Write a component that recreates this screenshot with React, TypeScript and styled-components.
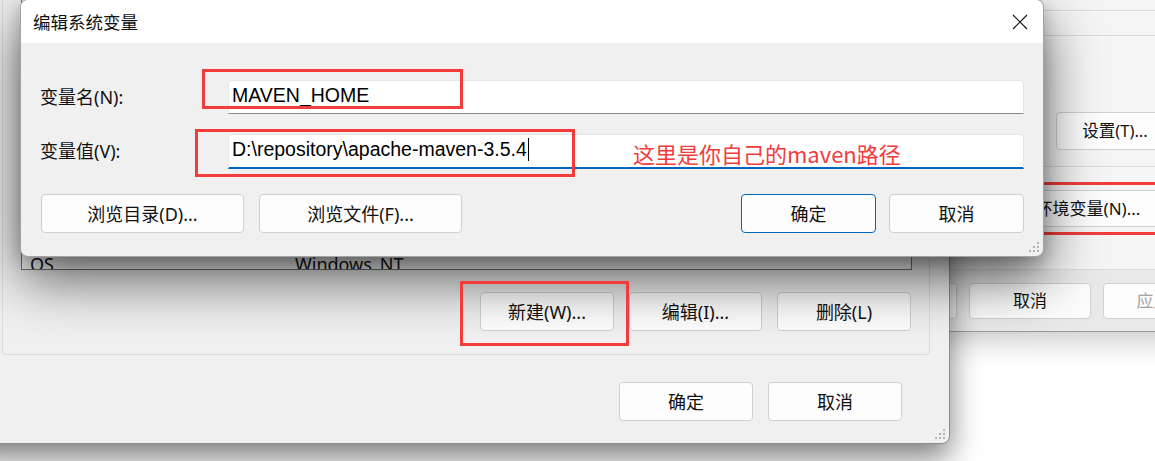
import React from "react";
import styled, { createGlobalStyle } from "styled-components";

const UI_FONT = `"Noto Sans", "Noto Sans CJK SC", sans-serif`;
const CJK_FONT = `"Noto Sans CJK SC", "Noto Sans", sans-serif`;
const MARK_RED = "#f23c3c";

const GlobalStyle = createGlobalStyle`
  *, *::before, *::after { box-sizing: border-box; }
  html, body { margin: 0; padding: 0; background: #fff; }
  body { font-family: ${UI_FONT}; }
`;

const Desktop = styled.div`
  position: relative;
  width: 1155px;
  height: 461px;
  overflow: hidden;
  background: #ffffff;
  color: #1b1b1b;
  font-family: ${UI_FONT};
`;

/* ---------- shared window parts ---------- */

const WinButton = styled.button<{ $w: number; $h?: number; $primary?: boolean; $muted?: boolean; $fs?: number }>`
  flex: none;
  width: ${(p) => p.$w}px;
  height: ${(p) => p.$h ?? 39}px;
  display: flex;
  align-items: center;
  justify-content: center;
  padding: 0;
  font-family: ${UI_FONT};
  font-size: ${(p) => p.$fs ?? 18}px;
  line-height: 1;
  color: ${(p) => (p.$muted ? "#a3a3a3" : "#111")};
  background: #fdfdfd;
  border: 1px solid ${(p) => (p.$primary ? "#0067c0" : "#d0d0d0")};
  border-radius: 4px;
`;

const Grip = styled.svg`
  position: absolute;
  right: 3px;
  bottom: 3px;
`;

function ResizeGrip() {
  const dots = [
    [9, 1],
    [5, 5],
    [9, 5],
    [1, 9],
    [5, 9],
    [9, 9],
  ];
  return (
    <Grip width="12" height="12" viewBox="0 0 12 12">
      {dots.map(([x, y]) => (
        <rect key={`${x}-${y}`} x={x} y={y} width="2" height="2" fill="#b4b4b4" />
      ))}
    </Grip>
  );
}

/* ---------- back window: 系统属性 ---------- */

const SysWindow = styled.section`
  position: absolute;
  left: 660px;
  top: -60px;
  width: 580px;
  height: 392px;
  display: flex;
  flex-direction: column;
  background: #f5f5f5;
  border: 1px solid #9a9a9a;
  border-radius: 8px;
  box-shadow: 0 8px 30px rgba(0, 0, 0, 0.22);
`;

const SysPage = styled.div`
  flex: 1;
  display: flex;
  flex-direction: column;
  padding: 9px 15px 0 20px;
`;

const SysGroup = styled.div<{ $h: number; $mt?: number }>`
  height: ${(p) => p.$h}px;
  margin-top: ${(p) => p.$mt ?? 0}px;
  display: flex;
  flex-direction: column;
  align-items: flex-end;
  justify-content: flex-end;
  padding: 0 49px 16px 0;
  border: 1px solid #dadada;
  border-radius: 4px;
`;

const EnvRow = styled.div`
  position: relative;
  height: 53px;
  margin-top: 15px;
  display: flex;
  align-items: center;
  justify-content: flex-end;
  padding-right: 56px;
`;

const MarkBox = styled.div`
  position: absolute;
  border: 3px solid ${MARK_RED};
`;

const SysButtonBar = styled.div`
  height: 62px;
  flex: none;
  display: flex;
  align-items: center;
  justify-content: flex-end;
  gap: 12px;
  padding-right: 14px;
  background: #e9e9e9;
  border-top: 1px solid #dedede;
  border-radius: 0 0 8px 8px;
`;

/* ---------- middle window: 环境变量 ---------- */

const EnvWindow = styled.section`
  position: absolute;
  left: -30px;
  top: -60px;
  width: 980px;
  height: 504px;
  display: flex;
  flex-direction: column;
  padding: 20px 19px 22px 31px;
  background: #f0f0f0;
  border: 1px solid #8c8c8c;
  border-radius: 8px;
  box-shadow: 0 14px 30px rgba(0, 0, 0, 0.5);
`;

const VarGroup = styled.div`
  flex: 1;
  display: flex;
  flex-direction: column;
  padding: 20px 17px 23px 18px;
  border: 1px solid #dcdcdc;
  border-radius: 4px;
`;

const VarList = styled.div`
  flex: 1;
  display: flex;
  flex-direction: column;
  justify-content: flex-end;
  overflow: hidden;
  background: #fff;
  border: 1px solid #777;
`;

const VarRow = styled.div<{ $last?: boolean }>`
  flex: none;
  display: grid;
  grid-template-columns: 265px 1fr;
  height: 22px;
  padding-left: 8px;
  font-size: 18px;
  line-height: 22px;
  color: #111;
  margin-bottom: ${(p) => (p.$last ? -6 : 0)}px;
`;

const ButtonRow = styled.div<{ $mt: number; $gap: number; $pr?: number }>`
  flex: none;
  display: flex;
  justify-content: flex-end;
  gap: ${(p) => p.$gap}px;
  margin-top: ${(p) => p.$mt}px;
  padding-right: ${(p) => p.$pr ?? 0}px;
`;

/* ---------- front dialog: 编辑系统变量 ---------- */

const EditDialog = styled.section`
  position: absolute;
  left: 20px;
  top: -1px;
  width: 1024px;
  display: flex;
  flex-direction: column;
  overflow: hidden;
  background: #f0f0f0;
  border: 1px solid rgba(0, 0, 0, 0.32);
  border-radius: 8px;
  box-shadow: 0 22px 56px rgba(0, 0, 0, 0.62), 0 6px 16px rgba(0, 0, 0, 0.2);
`;

const TitleBar = styled.header`
  height: 43px;
  display: flex;
  align-items: center;
  justify-content: space-between;
  padding-left: 12px;
  background: #fff;
`;

const Title = styled.h1`
  margin: 0;
  font-family: ${CJK_FONT};
  font-size: 17.5px;
  font-weight: 400;
  color: #111;
`;

const CloseButton = styled.div`
  width: 46px;
  height: 43px;
  display: flex;
  align-items: center;
  justify-content: center;
`;

const DialogBody = styled.div`
  display: flex;
  flex-direction: column;
  padding: 37px 19px 23px 19px;
`;

const FormGrid = styled.div`
  display: grid;
  grid-template-columns: 188px 1fr;
  grid-auto-rows: 34px;
  row-gap: 20px;
  align-items: center;
`;

const FieldLabel = styled.label`
  font-size: 18px;
  line-height: 1;
  color: #111;
`;

const TextField = styled.div<{ $focused?: boolean }>`
  height: ${(p) => (p.$focused ? 35 : 34)}px;
  display: flex;
  align-items: flex-start;
  padding: 3px 0 0 3px;
  font-family: "Liberation Sans", "Noto Sans", sans-serif;
  font-size: 19.5px;
  line-height: 22px;
  color: #000;
  background: #fff;
  border: 1px solid #e6e6e6;
  border-bottom: ${(p) => (p.$focused ? "2px solid #0067c0" : "1px solid #888")};
  border-radius: 4px 4px 0 0;
  white-space: pre;
`;

const Caret = styled.span`
  display: inline-block;
  width: 1px;
  height: 23px;
  margin-left: 1px;
  background: #000;
`;

const DialogButtons = styled.div`
  display: flex;
  align-items: center;
  gap: 15px;
  margin-top: 26px;
  padding-left: 1px;
`;

const Spacer = styled.div`
  flex: 1;
`;

const Note = styled.div`
  position: absolute;
  left: 633px;
  top: 139px;
  font-family: ${CJK_FONT};
  font-size: 22px;
  line-height: 28px;
  color: ${MARK_RED};
  white-space: nowrap;
`;

export default function App() {
  return (
    <>
      <GlobalStyle />
      <Desktop>
        <SysWindow>
          <SysPage>
            <SysGroup $h={61} />
            <SysGroup $h={132} $mt={24}>
              <WinButton $w={118} $h={38} $fs={16.5}>
                设置(T)...
              </WinButton>
            </SysGroup>
            <EnvRow>
              <WinButton $w={160} $h={37} $fs={17}>
                环境变量(N)...
              </WinButton>
              <MarkBox style={{ left: 120, right: -30, top: 0, bottom: 0 }} />
            </EnvRow>
          </SysPage>
          <SysButtonBar>
            <WinButton $w={122} $h={36} $fs={17}>
              确定
            </WinButton>
            <WinButton $w={122} $h={36} $fs={17}>
              取消
            </WinButton>
            <WinButton $w={122} $h={36} $fs={17} $muted>
              应用(A)
            </WinButton>
          </SysButtonBar>
        </SysWindow>

        <EnvWindow>
          <VarGroup>
            <VarList>
              <VarRow>
                <span>NUMBER_OF_PROCESSORS</span>
                <span>8</span>
              </VarRow>
              <VarRow $last>
                <span>OS</span>
                <span>Windows_NT</span>
              </VarRow>
            </VarList>
            <ButtonRow $mt={22} $gap={15} $pr={1}>
              <WinButton $w={134}>新建(W)...</WinButton>
              <WinButton $w={133}>编辑(I)...</WinButton>
              <WinButton $w={134}>删除(L)</WinButton>
            </ButtonRow>
          </VarGroup>
          <ButtonRow $mt={27} $gap={15} $pr={28}>
            <WinButton $w={134}>确定</WinButton>
            <WinButton $w={134}>取消</WinButton>
          </ButtonRow>
          <ResizeGrip />
        </EnvWindow>

        <EditDialog>
          <TitleBar>
            <Title>编辑系统变量</Title>
            <CloseButton>
              <svg width="16" height="16" viewBox="0 0 16 16">
                <path d="M1 1 L15 15 M15 1 L1 15" stroke="#1a1a1a" strokeWidth="1.2" fill="none" />
              </svg>
            </CloseButton>
          </TitleBar>
          <DialogBody>
            <FormGrid>
              <FieldLabel>变量名(N):</FieldLabel>
              <TextField>MAVEN_HOME</TextField>
              <FieldLabel>变量值(V):</FieldLabel>
              <TextField $focused>
                D:\repository\apache-maven-3.5.4
                <Caret />
              </TextField>
            </FormGrid>
            <DialogButtons>
              <WinButton $w={203}>浏览目录(D)...</WinButton>
              <WinButton $w={203}>浏览文件(F)...</WinButton>
              <Spacer />
              <WinButton $w={135} $primary>
                确定
              </WinButton>
              <WinButton $w={135} style={{ marginLeft: -2 }}>
                取消
              </WinButton>
            </DialogButtons>
          </DialogBody>
          <ResizeGrip />
        </EditDialog>

        <MarkBox style={{ left: 460, top: 281, width: 169, height: 65 }} />
        <MarkBox style={{ left: 202, top: 69, width: 261, height: 40 }} />
        <MarkBox style={{ left: 195, top: 129, width: 380, height: 48 }} />
        <Note>这里是你自己的maven路径</Note>
      </Desktop>
    </>
  );
}
